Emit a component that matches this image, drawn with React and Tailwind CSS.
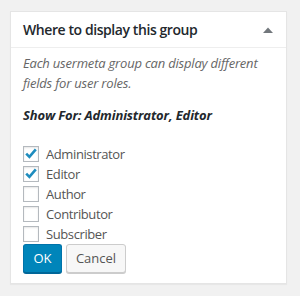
import React from "react";

function Check() {
  return (
    <svg width="16" height="16" viewBox="0 0 16 16" className="absolute left-[-1px] top-[-1px]">
      <path d="M3.2 7.6 L6.4 10.8 L12.8 3.4" fill="none" stroke="#1e8cbe" strokeWidth="2.6" strokeLinecap="butt" strokeLinejoin="miter" />
    </svg>
  );
}

function Row({ label, checked }) {
  return (
    <label className="flex items-center h-[20px]">
      <span className="relative w-[16px] h-[16px] border border-[#b4b9be] bg-white shadow-[inset_0_1px_2px_rgba(0,0,0,0.1)] shrink-0">
        {checked && <Check />}
      </span>
      <span className="ml-[7px] text-[13px] text-[#555] leading-[20px] tracking-[-0.4px]">{label}</span>
    </label>
  );
}

export default function App() {
  return (
    <div className="w-[300px] h-[296px] bg-[#f1f1f1] pl-[10px] pt-[11px]" style={{ fontFamily: '"Open Sans", "Noto Sans", sans-serif' }}>
      <div className="w-[277px] bg-white border border-[#e5e5e5] shadow-[0_1px_1px_rgba(0,0,0,0.04)]">
        <div className="h-[36px] flex items-center justify-between px-[12px] border-b border-[#eeeeee]">
          <span className="text-[14px] font-semibold text-[#23282d] tracking-[-0.42px]">Where to display this group</span>
          <svg width="10" height="6" viewBox="0 0 10 6" className="mr-[1px]">
            <path d="M0 6 L5 0.5 L10 6 Z" fill="#72777c" />
          </svg>
        </div>
        <div className="px-[12px] pt-[5px] pb-[10px]">
          <p className="text-[13px] italic text-[#666] leading-[20px] tracking-[-0.2px]">
            Each usermeta group can display different<br />fields for user roles.
          </p>
          <p className="mt-[12px] text-[13px] italic font-bold text-[#23282d] leading-[20px] tracking-[-0.15px]">
            Show For: Administrator, Editor
          </p>
          <div className="mt-[19px] flex flex-col">
            <Row label="Administrator" checked />
            <Row label="Editor" checked />
            <Row label="Author" />
            <Row label="Contributor" />
            <Row label="Subscriber" />
          </div>
          <div className="flex gap-[4px]">
            <button className="h-[29px] w-[39px] rounded-[3px] bg-[#0085ba] border border-[#0073aa] border-b-[#006799] text-white text-[13px] shadow-[0_1px_0_#006799]">
              OK
            </button>
            <button className="h-[29px] w-[60px] rounded-[3px] bg-[#f7f7f7] border border-[#cccccc] text-[#555] text-[13px] shadow-[0_1px_0_#cccccc]">
              Cancel
            </button>
          </div>
        </div>
      </div>
    </div>
  );
}
